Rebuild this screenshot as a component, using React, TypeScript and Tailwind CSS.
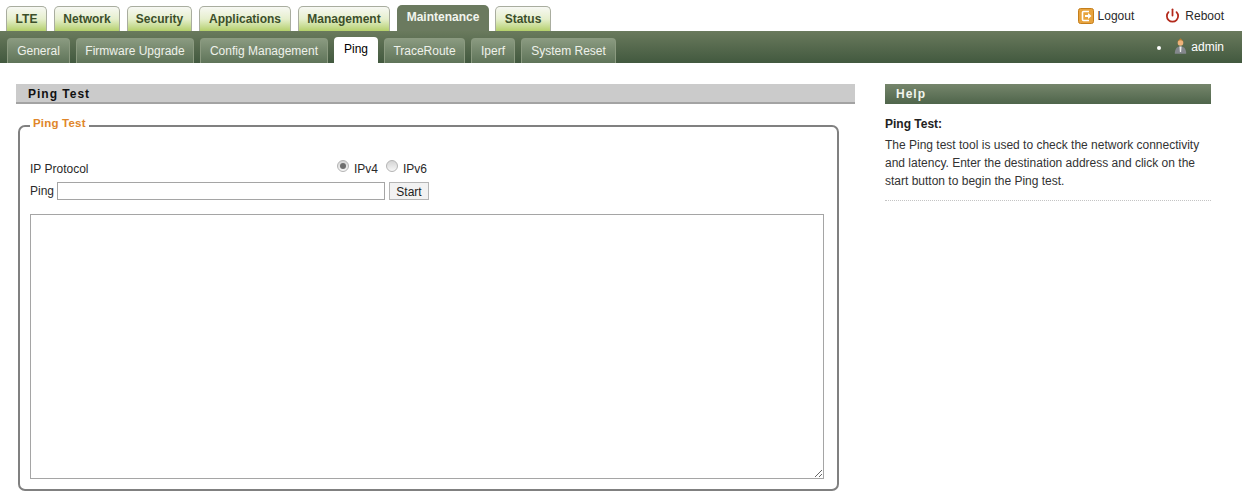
import { Power } from 'lucide-react'

const mainTabs = [
  { label: 'LTE', width: 'w-[41px]' },
  { label: 'Network', width: 'w-[66px]' },
  { label: 'Security', width: 'w-[65px]' },
  { label: 'Applications', width: 'w-[92px]' },
  { label: 'Management', width: 'w-[92px]' },
  { label: 'Maintenance', width: 'w-[92px]', active: true },
]

const subTabs = [
  { label: 'General', width: 'w-[63px]' },
  { label: 'Firmware Upgrade', width: 'w-[118px]' },
  { label: 'Config Management', width: 'w-[128px]' },
  { label: 'Ping', width: 'w-[44px]', active: true },
  { label: 'TraceRoute', width: 'w-[81px]' },
  { label: 'Iperf', width: 'w-[44px]' },
  { label: 'System Reset', width: 'w-[95px]' },
]

function LogoutIcon() {
  return (
    <svg width="16" height="16" viewBox="0 0 16 16" className="shrink-0">
      <rect x="0.5" y="0.5" width="15" height="15" rx="2" fill="#e8a33d" stroke="#c47f1c" />
      <path d="M11 3.500H5.500a1 1 0 0 0-1 1v7a1 1 0 0 0 1 1H11" fill="none" stroke="#fff" strokeWidth="1.6" />
      <path d="M7 7h3V5l3.500 3-3.500 3V9H7z" fill="#fff" />
    </svg>
  )
}

function AdminIcon() {
  return (
    <svg width="13" height="16" viewBox="0 0 13 16" className="shrink-0">
      <path d="M3.800 3 6.500.3 9.200 3v1.200H3.800z" fill="#b9782f" />
      <circle cx="6.500" cy="5" r="2.800" fill="#efb37a" />
      <path d="M.8 15.800c0-4.800 1.900-7.300 5.700-7.300s5.700 2.500 5.700 7.300z" fill="#83878c" />
      <path d="M5.400 8.500h2.200l-.5 5.500H5.900z" fill="#ececec" />
    </svg>
  )
}

function Radio({ checked }: { checked?: boolean }) {
  return (
    <span className="mb-[6px] flex h-[12px] w-[12px] items-center justify-center rounded-full border border-[#b4b4b4] bg-gradient-to-b from-[#d4d4d4] to-[#f6f6f6]">
      {checked && <span className="h-[6px] w-[6px] rounded-full bg-[#6e6e6e]" />}
    </span>
  )
}

function MainTab({ label, width, active }: { label: string; width: string; active?: boolean }) {
  if (active) {
    return (
      <div
        className={`${width} flex h-[26px] items-center justify-center rounded-t-[5px] bg-[#6b7a5f] pb-[2px] font-bold text-[#f2f5ee]`}
      >
        {label}
      </div>
    )
  }
  return (
    <div
      className={`${width} flex h-[25px] items-center justify-center rounded-t-[5px] border border-b-0 border-[#a9ad9f] bg-gradient-to-b from-[#f7f8f3] via-[#e6efcd] to-[#b5d06a] font-bold text-[#3c4f2a]`}
    >
      {label}
    </div>
  )
}

export default function App() {
  return (
    <div className="h-[499px] w-[1242px] overflow-hidden bg-white font-['Liberation_Sans',Arial,sans-serif] text-[12px] text-[#2a2a2a]">
      {/* Top tabs */}
      <div className="flex h-[31px] items-end pl-[6px]">
        <div className="flex items-end gap-[7px]">
          {mainTabs.map((tab) => (
            <MainTab key={tab.label} {...tab} />
          ))}
        </div>
        <div className="ml-[6px]">
          <MainTab label="Status" width="w-[56px]" />
        </div>
        <div className="ml-auto flex h-[31px] items-start pt-[7px] pr-[18px]">
          <div className="flex items-center gap-[4px]">
            <LogoutIcon />
            <span>Logout</span>
          </div>
          <div className="ml-[31px] flex items-center gap-[5px]">
            <Power size={15} strokeWidth={2.8} className="mb-[1px] text-[#b32a1c]" />
            <span>Reboot</span>
          </div>
        </div>
      </div>

      {/* Sub tabs */}
      <div className="flex h-[32px] items-end bg-gradient-to-b from-[#6a7a5d] to-[#42593f] pl-[7px]">
        <div className="flex items-end gap-[6px]">
          {subTabs.map((tab) =>
            tab.active ? (
              <div
                key={tab.label}
                className={`${tab.width} flex h-[26px] items-center justify-center rounded-t-[4px] bg-white pb-[2px] text-black`}
              >
                {tab.label}
              </div>
            ) : (
              <div
                key={tab.label}
                className={`${tab.width} flex h-[25px] items-center justify-center rounded-t-[4px] border border-b-0 border-[#8b9a80] bg-gradient-to-b from-[#8a9a80] to-[#5f7459] text-[#eef1ea]`}
              >
                {tab.label}
              </div>
            ),
          )}
        </div>
        <div className="ml-auto flex h-[32px] items-center pr-[18px] text-white">
          <span className="mt-[2px] mr-[13px] h-[4px] w-[4px] rounded-full bg-white" />
          <span className="mb-[3px]">
            <AdminIcon />
          </span>
          <span className="ml-[4px]">admin</span>
        </div>
      </div>

      {/* Content */}
      <div className="flex pt-[21px] pl-[16px]">
        <div className="w-[839px]">
          <div className="flex h-[20px] items-center border-b-2 border-[#a3a3a3] bg-[#cbcbcb] pt-[2px] pl-[12px] font-bold tracking-[1px] text-[#111]">
            Ping Test
          </div>
          <fieldset className="mt-[12px] ml-[2px] h-[375px] w-[821px] rounded-[7px] border-2 border-[#808080] px-[10px]">
            <legend className="ml-0 px-[3px] pb-[6px] text-[11.5px] leading-[14px] font-bold tracking-[0.2px] text-[#e0862a]">
              Ping Test
            </legend>
            <div className="mt-[23px] flex h-[20px] items-center">
              <span className="w-[307px]">IP Protocol</span>
              <Radio checked />
              <span className="ml-[5px]">IPv4</span>
              <span className="ml-[8px] flex">
                <Radio />
              </span>
              <span className="ml-[5px]">IPv6</span>
            </div>
            <div className="mt-[3px] flex h-[18px] items-center">
              <span>Ping</span>
              <input
                type="text"
                className="ml-[3px] h-[18px] w-[328px] border border-[#a5a5a5] bg-white outline-none"
              />
              <button className="ml-[4px] h-[18px] w-[40px] border border-[#b5b5b5] bg-[#f2f2f2] pb-[1px] text-[12px] text-[#222]">
                Start
              </button>
            </div>
            <textarea className="mt-[14px] block h-[265px] w-[794px] border border-[#a5a5a5] bg-white outline-none" />
          </fieldset>
        </div>

        <div className="ml-[30px] w-[326px]">
          <div className="flex h-[20px] items-center bg-gradient-to-b from-[#76866c] to-[#4f654b] pl-[11px] font-bold tracking-[1px] text-[#f2f5ee]">
            Help
          </div>
          <div className="border-b border-dotted border-[#c4c4c4] pb-[10px]">
            <p className="mt-[13px] leading-[14px] font-bold text-[#222]">Ping Test:</p>
            <p className="mt-[5px] leading-[18px] text-[#333]">
              The Ping test tool is used to check the network connectivity
              <br />
              and latency. Enter the destination address and click on the
              <br />
              start button to begin the Ping test.
            </p>
          </div>
        </div>
      </div>
    </div>
  )
}
